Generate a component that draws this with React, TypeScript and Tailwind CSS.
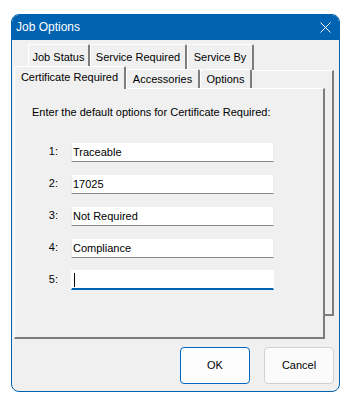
import clsx from "clsx";

const Tab = ({ label, w, h, active }: { label: string; w: number; h: number; active?: boolean }) => (
  <div
    style={{ width: w, height: h }}
    className={clsx(
      "flex items-center justify-center shrink-0 rounded-t-[2px] border-t border-l border-white border-r-2 border-r-[#7d7d7d] bg-[#f0f0f0] text-[11px] leading-[13px] text-black",
      active && "relative z-10 -mb-px pb-[2px]"
    )}
  >
    {label}
  </div>
);

const options = ["Traceable", "17025", "Not Required", "Compliance", ""];

const App = () => {
  return (
    <div className="h-[398px] w-[348px] bg-white pt-[14px] pl-[11px] font-['Liberation_Sans',Arial,sans-serif]">
      <div className="flex h-[378px] w-[329px] flex-col overflow-hidden rounded-[8px] border border-[#0063b1] bg-[#f0f0f0]">
        {/* title bar */}
        <div className="flex h-[25px] shrink-0 items-center justify-between bg-[#0063b1] pl-[4px] pr-[8px] text-[12px] text-white">
          <span className="-mt-px">Job Options</span>
          <svg width="11" height="11" viewBox="0 0 11 11" className="-mt-px">
            <path d="M0.5 0.5 L10.5 10.5 M10.5 0.5 L0.5 10.5" stroke="white" strokeWidth="1" fill="none" />
          </svg>
        </div>

        {/* tab control */}
        <div className="ml-[2px] mt-[4px] w-[320px]">
          <div className="flex h-[26px] pl-[14px]">
            <Tab label="Job Status" w={62} h={26} />
            <Tab label="Service Required" w={97} h={26} />
            <Tab label="Service By" w={67} h={26} />
          </div>
          <div className="h-[246px] border-t border-white border-r-2 border-b-2 border-r-[#7d7d7d] border-b-[#7d7d7d]">
            <div className="-mt-[5px] w-[311px]">
              <div className="flex h-[22px] items-end">
                <Tab label="Certificate Required" w={112} h={23} active />
                <Tab label="Accessories" w={74} h={19} />
                <Tab label="Options" w={52} h={19} />
              </div>
              <div className="h-[251px] border-t border-l border-white border-r-2 border-b-2 border-r-[#7d7d7d] border-b-[#7d7d7d] bg-[#f0f0f0] pl-[17px] pt-[17px] text-[11px] leading-[13px] text-black">
                <div>Enter the default options for Certificate Required:</div>
                <div className="mt-[23px] flex flex-col gap-[12px]">
                  {options.map((opt, i) => (
                    <div key={i} className="flex items-center">
                      <span className="-mt-[2px] w-[26px] text-right">{i + 1}:</span>
                      <div
                        className={clsx(
                          "ml-[13px] flex h-[20px] w-[203px] items-center border bg-white px-[1px]",
                          i === 4
                            ? "border-white border-b-2 border-b-[#0063b1]"
                            : "border-[#ececec] border-b-[#8a8a8a]"
                        )}
                      >
                        {i === 4 ? <div className="ml-px h-[14px] w-px bg-black" /> : opt}
                      </div>
                    </div>
                  ))}
                </div>
              </div>
            </div>
          </div>
        </div>

        {/* buttons */}
        <div className="mt-[31px] flex justify-end gap-[14px] pr-[5px] text-[11px] text-black">
          <button className="h-[37px] w-[70px] rounded-[4px] border border-[#0067c0] bg-[#fdfdfd]">OK</button>
          <button className="h-[37px] w-[70px] rounded-[4px] border border-[#d0d0d0] bg-[#fbfbfb]">Cancel</button>
        </div>
      </div>
    </div>
  );
};

export default App;
